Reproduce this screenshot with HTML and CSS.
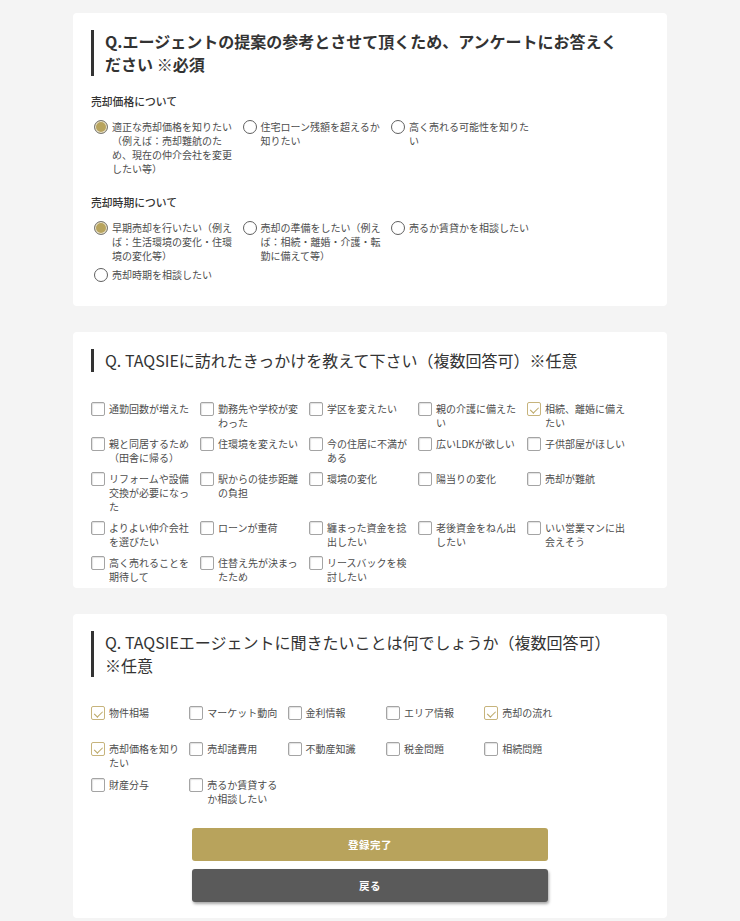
FILE: index.html
```html
<!DOCTYPE html>
<html lang="ja">
<head>
<meta charset="utf-8">
<title>アンケート</title>
<link rel="stylesheet" href="styles.css">
</head>
<body>
<main class="page">

  <section class="card card--survey">
    <h2 class="q-title q-title--strong">Q.エージェントの提案の参考とさせて頂くため、アンケートにお答えください ※必須</h2>

    <div class="group">
      <h3 class="group-label">売却価格について</h3>
      <div class="radio-grid">
        <label class="opt"><input type="radio" name="price" checked><span class="opt-text">適正な売却価格を知りたい（例えば：売却難航のため、現在の仲介会社を変更したい等）</span></label>
        <label class="opt"><input type="radio" name="price"><span class="opt-text">住宅ローン残額を超えるか知りたい</span></label>
        <label class="opt"><input type="radio" name="price"><span class="opt-text">高く売れる可能性を知りたい</span></label>
      </div>
    </div>

    <div class="group group--next">
      <h3 class="group-label">売却時期について</h3>
      <div class="radio-grid">
        <label class="opt"><input type="radio" name="timing" checked><span class="opt-text">早期売却を行いたい（例えば：生活環境の変化・住環境の変化等）</span></label>
        <label class="opt"><input type="radio" name="timing"><span class="opt-text">売却の準備をしたい（例えば：相続・離婚・介護・転勤に備えて等）</span></label>
        <label class="opt"><input type="radio" name="timing"><span class="opt-text">売るか賃貸かを相談したい</span></label>
        <label class="opt"><input type="radio" name="timing"><span class="opt-text">売却時期を相談したい</span></label>
      </div>
    </div>
  </section>

  <section class="card card--reasons">
    <h2 class="q-title">Q. TAQSIEに訪れたきっかけを教えて下さい（複数回答可）※任意</h2>
    <div class="check-grid check-grid--reasons">
      <label class="opt"><input type="checkbox"><span class="opt-text">通勤回数が増えた</span></label>
      <label class="opt"><input type="checkbox"><span class="opt-text">勤務先や学校が変わった</span></label>
      <label class="opt"><input type="checkbox"><span class="opt-text">学区を変えたい</span></label>
      <label class="opt"><input type="checkbox"><span class="opt-text">親の介護に備えたい</span></label>
      <label class="opt"><input type="checkbox" checked><span class="opt-text">相続、離婚に備えたい</span></label>

      <label class="opt"><input type="checkbox"><span class="opt-text">親と同居するため（田舎に帰る）</span></label>
      <label class="opt"><input type="checkbox"><span class="opt-text">住環境を変えたい</span></label>
      <label class="opt"><input type="checkbox"><span class="opt-text">今の住居に不満がある</span></label>
      <label class="opt"><input type="checkbox"><span class="opt-text">広いLDKが欲しい</span></label>
      <label class="opt"><input type="checkbox"><span class="opt-text">子供部屋がほしい</span></label>

      <label class="opt"><input type="checkbox"><span class="opt-text">リフォームや設備交換が必要になった</span></label>
      <label class="opt"><input type="checkbox"><span class="opt-text">駅からの徒歩距離の負担</span></label>
      <label class="opt"><input type="checkbox"><span class="opt-text">環境の変化</span></label>
      <label class="opt"><input type="checkbox"><span class="opt-text">陽当りの変化</span></label>
      <label class="opt"><input type="checkbox"><span class="opt-text">売却が難航</span></label>

      <label class="opt"><input type="checkbox"><span class="opt-text">よりよい仲介会社を選びたい</span></label>
      <label class="opt"><input type="checkbox"><span class="opt-text">ローンが重荷</span></label>
      <label class="opt"><input type="checkbox"><span class="opt-text">纏まった資金を捻出したい</span></label>
      <label class="opt"><input type="checkbox"><span class="opt-text">老後資金をねん出したい</span></label>
      <label class="opt"><input type="checkbox"><span class="opt-text">いい営業マンに出会えそう</span></label>

      <label class="opt"><input type="checkbox"><span class="opt-text">高く売れることを期待して</span></label>
      <label class="opt"><input type="checkbox"><span class="opt-text">住替え先が決まったため</span></label>
      <label class="opt"><input type="checkbox"><span class="opt-text">リースバックを検討したい</span></label>
    </div>
  </section>

  <section class="card card--topics">
    <h2 class="q-title">Q. TAQSIEエージェントに聞きたいことは何でしょうか（複数回答可）※任意</h2>
    <div class="check-grid check-grid--topics">
      <label class="opt"><input type="checkbox" checked><span class="opt-text">物件相場</span></label>
      <label class="opt"><input type="checkbox"><span class="opt-text">マーケット動向</span></label>
      <label class="opt"><input type="checkbox"><span class="opt-text">金利情報</span></label>
      <label class="opt"><input type="checkbox"><span class="opt-text">エリア情報</span></label>
      <label class="opt"><input type="checkbox" checked><span class="opt-text">売却の流れ</span></label>

      <label class="opt"><input type="checkbox" checked><span class="opt-text">売却価格を知りたい</span></label>
      <label class="opt"><input type="checkbox"><span class="opt-text">売却諸費用</span></label>
      <label class="opt"><input type="checkbox"><span class="opt-text">不動産知識</span></label>
      <label class="opt"><input type="checkbox"><span class="opt-text">税金問題</span></label>
      <label class="opt"><input type="checkbox"><span class="opt-text">相続問題</span></label>

      <label class="opt"><input type="checkbox"><span class="opt-text">財産分与</span></label>
      <label class="opt"><input type="checkbox"><span class="opt-text">売るか賃貸するか相談したい</span></label>
    </div>

    <div class="actions">
      <button type="button" class="btn btn--primary">登録完了</button>
      <button type="button" class="btn btn--back">戻る</button>
    </div>
  </section>

</main>
</body>
</html>
```

FILE: styles.css
```css
* {
  box-sizing: border-box;
}

html,
body {
  margin: 0;
  padding: 0;
}

body {
  background: #f4f4f4;
  font-family: "Noto Sans CJK JP", "Noto Sans", sans-serif;
  color: #4d4d4d;
}

.page {
  width: 594px;
  margin: 0 auto;
  padding-top: 13px;
  display: flex;
  flex-direction: column;
  gap: 26px;
}

.card {
  background: #fff;
  border-radius: 4px;
  padding: 17px 18px 24px;
}

.card--reasons {
  padding-bottom: 4px;
}

.card--topics {
  padding-bottom: 16px;
}

/* question headings */
.q-title {
  margin: 0;
  border-left: 3px solid #333;
  padding: 0 28px 0 11px;
  font-size: 16px;
  line-height: 23px;
  font-weight: 400;
  color: #333;
}

.q-title--strong {
  font-weight: 700;
}

/* radio groups */
.group {
  margin-top: 18px;
}

.group--next {
  margin-top: 19px;
}

.group-label {
  margin: 0 0 12px;
  font-size: 10.8px;
  line-height: 14px;
  font-weight: 500;
  color: #333;
}

.radio-grid {
  display: grid;
  grid-template-columns: repeat(3, 148.5px);
  row-gap: 5px;
}

/* option rows */
.opt {
  display: flex;
  align-items: flex-start;
  font-size: 10px;
  line-height: 14px;
  color: #4d4d4d;
}

.opt-text {
  min-width: 0;
}

.opt input {
  appearance: none;
  -webkit-appearance: none;
  flex: none;
  background: #fff;
  position: relative;
}

.opt input[type="radio"] {
  width: 14px;
  height: 14px;
  margin: 0 4px 0 3px;
  border: 1.5px solid #5f5f5f;
  border-radius: 50%;
}

.opt input[type="radio"]:checked {
  border-color: #7a7a7a;
  background: #b8a45e;
  box-shadow: inset 0 0 0 1px #ece6d3;
}

.radio-grid .opt {
  padding-right: 3px;
}

/* checkbox grids */
.check-grid {
  display: grid;
}

.check-grid .opt {
  padding-right: 5px;
}

.opt input[type="checkbox"] {
  width: 14px;
  height: 14px;
  margin: 0 4px 0 0;
  border: 1px solid #a4a4a4;
  border-radius: 2px;
  box-shadow: inset 1px 1px 1px rgba(0, 0, 0, 0.12);
}

.opt input[type="checkbox"]:checked {
  border-color: #c7b47c;
  box-shadow: none;
}

.opt input[type="checkbox"]:checked::after {
  content: "";
  position: absolute;
  left: 4px;
  top: 1.5px;
  width: 3.5px;
  height: 7px;
  border: solid #bba765;
  border-width: 0 1px 1px 0;
  transform: rotate(45deg);
}

.check-grid--reasons {
  grid-template-columns: repeat(5, 109px);
  row-gap: 7px;
  margin-top: 30px;
}

.check-grid--topics {
  grid-template-columns: repeat(5, 98.3px);
  row-gap: 8px;
  margin-top: 29px;
}

.check-grid--topics .opt {
  min-height: 28px;
}

/* buttons */
.actions {
  margin-top: 22px;
  display: flex;
  flex-direction: column;
  align-items: center;
  gap: 8px;
}

.btn {
  width: 356px;
  height: 33px;
  border: 0;
  border-radius: 3px;
  color: #fff;
  font-family: "Noto Sans CJK JP", "Noto Sans", sans-serif;
  font-size: 10.5px;
  font-weight: 700;
  letter-spacing: 0.5px;
  line-height: 33px;
  padding: 0;
  cursor: pointer;
}

.btn--primary {
  background: #b8a35c;
}

.btn--back {
  background: #5a5a5a;
  box-shadow: 1px 2px 3px rgba(0, 0, 0, 0.35);
}
```
